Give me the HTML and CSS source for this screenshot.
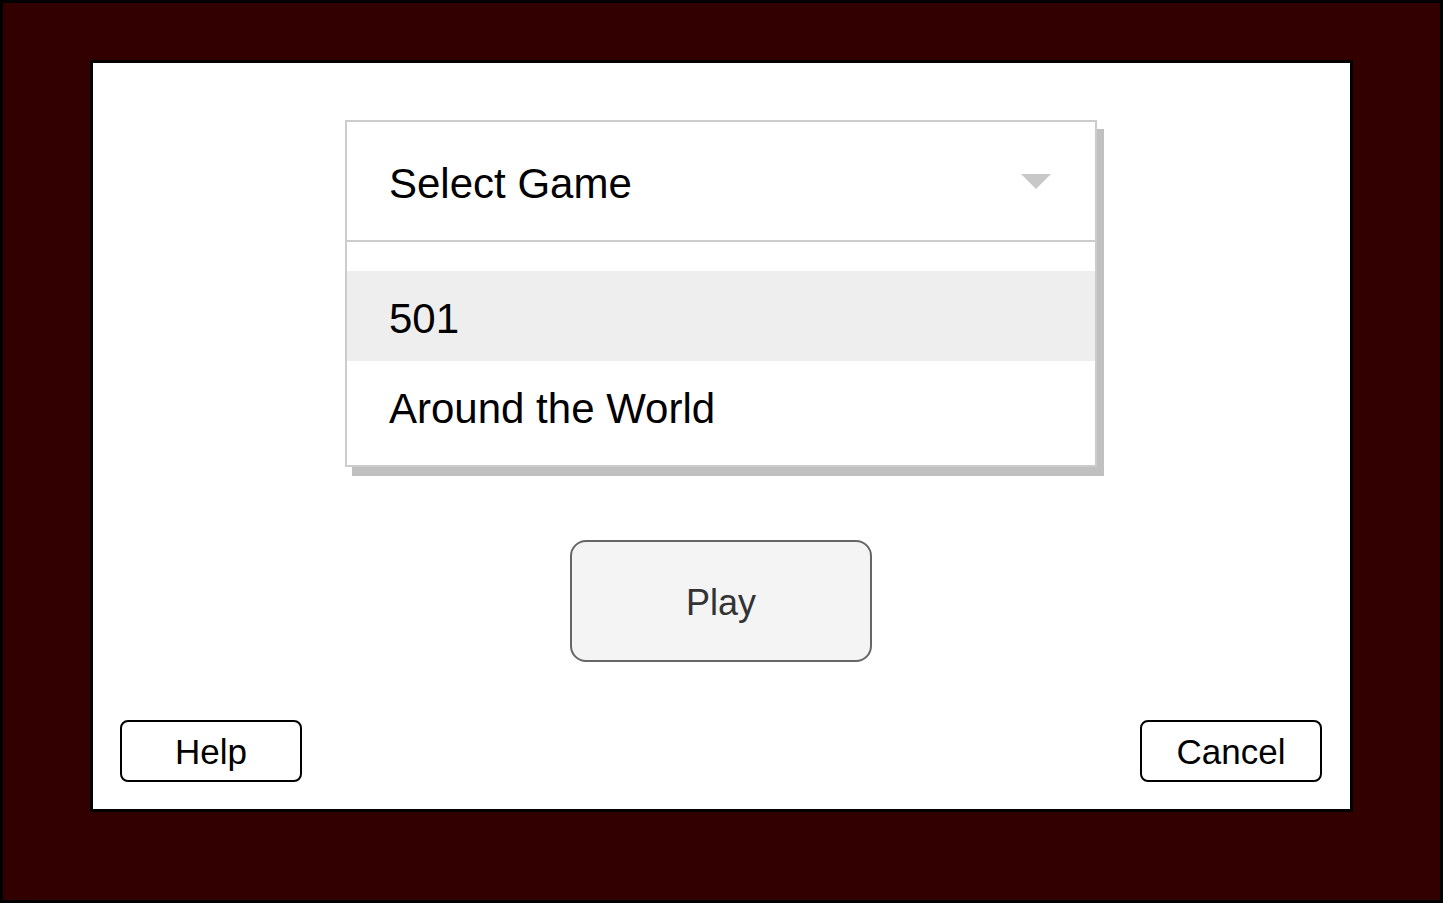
FILE: index.html
```html
<!DOCTYPE html>
<html>
<head>
<meta charset="utf-8">
<link rel="stylesheet" href="styles.css">
</head>
<body>
<div class="frame">
  <div class="panel">
    <div class="dropdown">
      <div class="dropdown-head">
        <span class="dropdown-label">Select Game</span>
        <svg class="caret" width="30" height="16" viewBox="0 0 30 16"><polygon points="0,0 30,0 15,15" fill="#c8c8c8"/></svg>
      </div>
      <div class="dropdown-list">
        <div class="option selected">501</div>
        <div class="option">Around the World</div>
      </div>
    </div>
    <button class="play">Play</button>
    <div class="footer">
      <button class="small-btn">Help</button>
      <button class="small-btn">Cancel</button>
    </div>
  </div>
</div>
</body>
</html>
```
FILE: styles.css
```css
* { box-sizing: border-box; }
html, body { margin: 0; padding: 0; }
body {
  font-family: "Liberation Sans", Arial, sans-serif;
  width: 1443px;
  height: 903px;
  overflow: hidden;
}
.frame {
  width: 1443px;
  height: 903px;
  background: #330000;
  border: 3px solid #000;
  padding: 57px 0 0 87px;
}
.panel {
  width: 1263px;
  height: 752px;
  background: #fff;
  border: 3px solid #000;
  display: flex;
  flex-direction: column;
  align-items: center;
  padding: 57px 28px 27px 27px;
}
.dropdown {
  width: 752px;
  border: 2px solid #cccccc;
  background: #fff;
  box-shadow: 7px 9px 0 #c0c0c0;
}
.dropdown-head {
  height: 120px;
  border-bottom: 2px solid #cccccc;
  display: flex;
  align-items: center;
  justify-content: space-between;
  padding: 0 44px 0 42px;
}
.dropdown-label {
  font-size: 42px;
  color: #000;
  padding-top: 5px;
}
.caret { display: block; margin-top: 2px; }
.dropdown-list {
  padding: 29px 0 14px;
}
.option {
  height: 90px;
  display: flex;
  align-items: center;
  padding: 5px 0 0 42px;
  font-size: 42px;
  color: #000;
}
.option.selected { background: #eeeeee; }
.play {
  margin-top: 73px;
  width: 302px;
  height: 122px;
  border: 2px solid #666666;
  border-radius: 16px;
  background: #f4f4f4;
  color: #333333;
  font-family: inherit;
  font-size: 36px;
  padding: 4px 0 0;
}
.footer {
  margin-top: auto;
  width: 100%;
  display: flex;
  justify-content: space-between;
}
.small-btn {
  width: 182px;
  height: 62px;
  border: 2px solid #000;
  border-radius: 8px;
  background: #fff;
  color: #000;
  font-family: inherit;
  font-size: 35px;
  padding: 2px 0 0;
}
```
